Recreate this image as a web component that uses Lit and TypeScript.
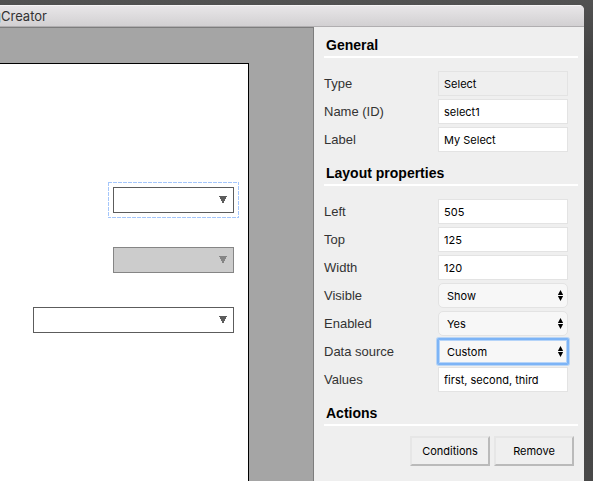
import { LitElement, html, css, svg } from "lit";
import { customElement, property } from "lit/decorators.js";

interface Field {
  id: string;
  label: string;
  value: string;
  kind?: "text" | "select" | "readonly";
  focused?: boolean;
}

interface Section {
  title: string;
  fields: Field[];
}

const SECTIONS: Section[] = [
  {
    title: "General",
    fields: [
      { id: "type", label: "Type", value: "Select", kind: "readonly" },
      { id: "name", label: "Name (ID)", value: "select1" },
      { id: "label", label: "Label", value: "My Select" },
    ],
  },
  {
    title: "Layout properties",
    fields: [
      { id: "left", label: "Left", value: "505" },
      { id: "top", label: "Top", value: "125" },
      { id: "width", label: "Width", value: "120" },
      { id: "visible", label: "Visible", value: "Show", kind: "select" },
      { id: "enabled", label: "Enabled", value: "Yes", kind: "select" },
      { id: "source", label: "Data source", value: "Custom", kind: "select", focused: true },
      { id: "values", label: "Values", value: "first, second, third" },
    ],
  },
];

/* A drop-down placed on the dialog being designed. */
@customElement("design-select")
export class DesignSelect extends LitElement {
  @property({ type: Boolean }) selected = false;
  @property({ type: Boolean, reflect: true }) disabled = false;
  @property() name = "";

  static styles = css`
    :host {
      display: block;
      position: relative;
      height: 26px;
      color: #5c5c5c;
    }
    :host([disabled]) {
      color: #858585;
    }
    .box {
      display: block;
      box-sizing: border-box;
      width: 100%;
      height: 100%;
      margin: 0;
      border: 1px solid currentColor;
      border-radius: 0;
      background: #fff;
      color: inherit;
      opacity: 1;
      appearance: none;
      outline: none;
    }
    .box:disabled {
      background: #ccc;
    }
    .arrow {
      position: absolute;
      right: 7px;
      top: 9px;
      width: 8px;
      height: 7px;
      pointer-events: none;
    }
    .outline {
      position: absolute;
      left: -5px;
      top: -5px;
      width: calc(100% + 10px);
      height: calc(100% + 10px);
      overflow: hidden;
      pointer-events: none;
    }
  `;

  render() {
    return html`
      <select class="box" aria-label=${this.name} ?disabled=${this.disabled}></select>
      <svg class="arrow" viewBox="0 0 8 7" shape-rendering="crispEdges" aria-hidden="true">
        <path fill="currentColor" d="M0 0H8V1H7V3H6V5H5V7H3V5H2V3H1V1H0Z" />
      </svg>
      ${this.selected
        ? html`<svg class="outline" aria-hidden="true" stroke="#a4c6fb" stroke-width="2" stroke-dasharray="4 1">
            ${svg`<rect width="100%" height="100%" fill="none" />`}
          </svg>`
        : null}
    `;
  }
}

@customElement("app-root")
export class AppRoot extends LitElement {
  static styles = css`
    :host {
      display: flex;
      box-sizing: border-box;
      min-height: 100vh;
      padding: 5px 9px 0 0;
      background: linear-gradient(#525252, #434343 60px, #484848);
      font-family: "Liberation Sans", Arial, sans-serif;
      font-size: 13px;
      line-height: 16px;
      color: #333;
    }
    .window {
      flex: 1;
      min-width: 0;
      display: flex;
      flex-direction: column;
      border-top-right-radius: 5px;
      overflow: hidden;
      background: #efefef;
    }
    .titlebar {
      box-sizing: border-box;
      height: 22px;
      border-top: 1px solid #f5f4f5;
      border-bottom: 1px solid #b0aeb0;
      background: linear-gradient(#e8e6e8, #d2d0d2);
      font-family: Inter, sans-serif;
      line-height: 21px;
      text-indent: -7px;
      white-space: nowrap;
    }
    .body {
      flex: 1;
      display: flex;
    }
    .canvas {
      flex: 1;
      min-width: 0;
      display: flex;
      padding: 35px 64px 0 0;
      border-top: 1px solid #7d7d7d;
      border-right: 1px solid #7d7d7d;
      background: #a5a5a5;
    }
    .page {
      flex: 1;
      position: relative;
      overflow: hidden;
      border-top: 1px solid #000;
      border-right: 1px solid #000;
      background: #fff;
    }
    .item {
      position: absolute;
      right: 14px;
      width: 121px;
    }
    .first { top: 123px; }
    .second { top: 183px; }
    .third { top: 243px; width: 201px; }
    .panel {
      flex: none;
      box-sizing: border-box;
      width: 270px;
      padding: 10px 6px 15px 10px;
    }
    .heading {
      margin: 0;
      padding: 0 2px 3px;
      border-bottom: 2px solid #fff;
      font-size: 14px;
      line-height: 16px;
      color: #000;
    }
    .fields {
      display: grid;
      gap: 3px;
      margin: 13px 0;
      padding-right: 10px;
    }
    .row {
      display: grid;
      grid-template-columns: 1fr 130px;
      align-items: center;
    }
    .control {
      display: grid;
      position: relative;
    }
    .input {
      box-sizing: border-box;
      width: 100%;
      height: 25px;
      margin: 0;
      padding: 0 5px;
      border: 1px solid #e3e3e3;
      border-radius: 0;
      background: #fff;
      font: 11px Inter, sans-serif;
      color: #000;
      appearance: none;
      outline: none;
    }
    .input:read-only:not(.dropdown) {
      background: #efefef;
    }
    .dropdown {
      padding: 0 8px;
      border-radius: 5px;
      background: #f7f7f7;
    }
    .focused {
      border-radius: 1px;
      border-color: #7db4f6;
      box-shadow: 0 0 0 1px #7db4f6, 0 0 0 2px #b9d5f5, inset 0 0 0 1px #b5d4f9;
    }
    .stepper {
      position: absolute;
      right: 5px;
      top: 7px;
      width: 5px;
      height: 11px;
      pointer-events: none;
    }
    .actions {
      display: flex;
      justify-content: flex-end;
      gap: 4px;
      margin-top: 10px;
      padding-right: 4px;
    }
    .button {
      box-sizing: border-box;
      width: 80px;
      height: 30px;
      padding: 0;
      border: 2px solid;
      border-color: #e6e6e6 #bababa #bababa #e6e6e6;
      background: #efefef;
      font: 11px Inter, sans-serif;
      color: #000;
    }
  `;

  private renderField(f: Field) {
    return html`
      <div class="row">
        <label for=${f.id}>${f.label}</label>
        <div class="control">
          ${f.kind === "select"
            ? html`
                <select id=${f.id} class="input dropdown ${f.focused ? "focused" : ""}">
                  <option>${f.value}</option>
                </select>
                <svg class="stepper" viewBox="0 0 5 11" aria-hidden="true">
                  <path fill="#000" d="M2.5 0L5.2 5H-.2ZM-.2 6H5.2L2.5 11Z" />
                </svg>
              `
            : html`<input id=${f.id} class="input" type="text" .value=${f.value} ?readonly=${f.kind === "readonly"} />`}
        </div>
      </div>
    `;
  }

  render() {
    return html`
      <div class="window">
        <header class="titlebar">gCreator</header>
        <div class="body">
          <main class="canvas">
            <div class="page">
              <design-select class="item first" name="My Select" selected></design-select>
              <design-select class="item second" name="Disabled select" disabled></design-select>
              <design-select class="item third" name="Wide select"></design-select>
            </div>
          </main>
          <aside class="panel">
            ${SECTIONS.map(
              (s) => html`
                <h2 class="heading">${s.title}</h2>
                <div class="fields">${s.fields.map((f) => this.renderField(f))}</div>
              `
            )}
            <h2 class="heading">Actions</h2>
            <div class="actions">
              <button class="button" type="button">Conditions</button>
              <button class="button" type="button">Remove</button>
            </div>
          </aside>
        </div>
      </div>
    `;
  }
}
